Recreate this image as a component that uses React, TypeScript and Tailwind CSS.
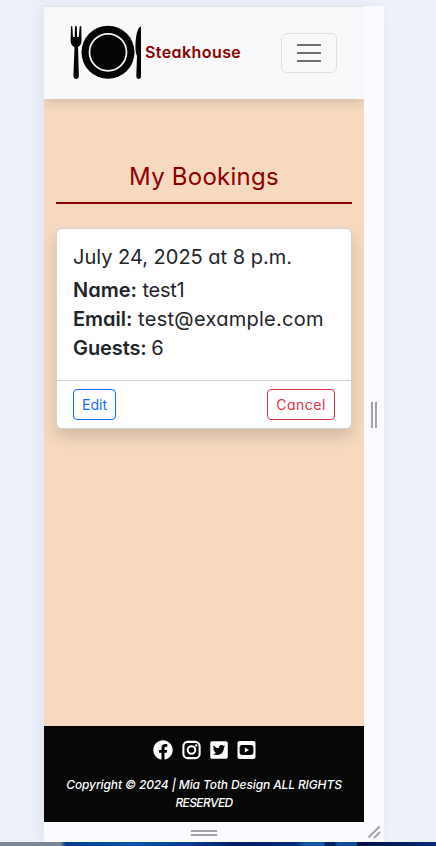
import { FaFacebook, FaTwitterSquare } from "react-icons/fa";

function PlateLogo() {
  return (
    <svg width="72" height="56" viewBox="0 0 72 56" className="shrink-0">
      <g fill="#050505">
        <path d="M1 1.5 Q1.8 .3 2.3 1.5 L3 12 L4.7 12 L5 1.5 Q5.8 .3 6.8 1.5 L7.1 12 L8.8 12 L9.7 1.5 Q10.7 .3 11.3 1.5 L11.5 16 Q11.3 20.5 8 22 L8.9 51 Q8.5 54 6.2 54 Q3.8 54 3.4 51 L4.5 22 Q.8 20.5 .6 16 Z" />
        <circle cx="38" cy="27.3" r="26.5" />
        <path d="M71 1.5 Q66.5 2.5 65.5 18 Q65 27 67 31 L66.3 51 Q66.5 54 68.8 54 Q71 54 71 51 Z" />
      </g>
      <circle cx="38" cy="27.3" r="18.5" fill="none" stroke="#f5f5f5" strokeWidth="1.7" />
    </svg>
  );
}

function InstagramIcon() {
  return (
    <svg width="19" height="20" viewBox="0 0 19 20" className="shrink-0">
      <rect x="1.4" y="1.9" width="16.2" height="16.2" rx="4.2" fill="none" stroke="white" strokeWidth="2.1" />
      <circle cx="9.5" cy="10" r="3.8" fill="none" stroke="white" strokeWidth="2" />
      <circle cx="14.2" cy="5.4" r="1.2" fill="white" />
    </svg>
  );
}

function YoutubeIcon() {
  return (
    <svg width="19" height="20" viewBox="0 0 19 20" className="shrink-0">
      <rect x=".5" y="1" width="18" height="18" rx="2" fill="white" />
      <rect x="2.6" y="5" width="13.8" height="10" rx="2.4" fill="#070707" />
      <path d="M7.8 7.5 12 10 7.8 12.5Z" fill="white" />
    </svg>
  );
}

function Navbar() {
  return (
    <header className="relative z-10 flex h-[93px] shrink-0 items-center border-t border-[#dfe1e5] bg-[#f8f9fa] pl-[26px] pr-[27px] shadow-[0_2px_12px_rgba(0,0,0,0.16)]">
      <PlateLogo />
      <span className="ml-[3px] mt-[-3px] text-[16px] font-semibold tracking-[0.42px] text-[#8b0000]">Steakhouse</span>
      <button aria-label="Menu" className="ml-auto flex h-10 w-14 flex-col items-center justify-center gap-[6px] rounded-md border border-[#dfe0e2]">
        <span className="h-[2px] w-6 bg-[#6f7072]" />
        <span className="h-[2px] w-6 bg-[#6f7072]" />
        <span className="h-[2px] w-6 bg-[#6f7072]" />
      </button>
    </header>
  );
}

function BookingCard() {
  return (
    <article className="mt-6 flex h-[201px] flex-col rounded-md border border-[#d0d1d3] bg-white text-[#212529] shadow-[0_8px_16px_rgba(0,0,0,0.15)]">
      <div className="flex-1 px-4 pt-[14px] text-[20px]">
        <h2 className="mb-1 h-[29px] whitespace-nowrap leading-[29px]">July 24, 2025 at 8 p.m.</h2>
        <p className="h-[29px] whitespace-nowrap leading-[29px]"><strong className="font-semibold">Name:</strong> <span className="tracking-[-0.25px]">test1</span></p>
        <p className="h-[29px] whitespace-nowrap leading-[29px]"><strong className="font-semibold">Email:</strong> <span className="tracking-[0.28px]">test@example.com</span></p>
        <p className="h-[29px] whitespace-nowrap leading-[29px]"><strong className="font-semibold tracking-[-0.1px]">Guests:</strong> <span className="-ml-px">6</span></p>
      </div>
      <div className="flex h-12 items-center justify-between border-t border-[#d0d1d3] px-4">
        <button className="h-[31px] w-[43px] rounded border border-[#0d6efd] text-[14px] leading-[28px] text-[#0d6efd]">Edit</button>
        <button className="h-[31px] w-[68px] rounded border border-[#dc3545] text-[14px] leading-[28px] tracking-[0.5px] text-[#dc3545]">Cancel</button>
      </div>
    </article>
  );
}

function Footer() {
  return (
    <footer className="flex h-24 shrink-0 flex-col items-center bg-[#070707] pt-[14px] text-white">
      <div className="flex gap-[9px]">
        <FaFacebook className="h-5 w-5" />
        <InstagramIcon />
        <FaTwitterSquare className="h-5 w-[18px]" />
        <YoutubeIcon />
      </div>
      <p className="mt-4 whitespace-nowrap text-center text-[12px] font-medium italic leading-[18px] tracking-[-0.12px]">
        <span>Copyright © 2024 | Mia Toth Design ALL RIGHTS</span>
        <br />
        <span className="tracking-[-0.6px]">RESERVED</span>
      </p>
    </footer>
  );
}

export default function App() {
  return (
    <div className="flex h-[846px] w-[436px] flex-col overflow-hidden bg-[#ecf1fa] pt-[6px] font-['Inter','Liberation_Sans',sans-serif] [font-feature-settings:'cv11']">
      <div className="ml-11 flex h-[836px] w-[340px] shrink-0 flex-col bg-[#f9fbff] shadow-[-4px_0_12px_rgba(80,100,130,0.08)]">
        <div className="flex h-[816px]">
          <div className="flex w-[320px] flex-col overflow-hidden bg-[#f6d9bf]">
            <Navbar />
            <main className="flex-1 px-3 pt-[60px]">
              <h1 className="h-[45px] border-b-2 border-[#8b0000] text-center text-[24px] leading-[36px] tracking-[0.25px] text-[#8b0000]">My Bookings</h1>
              <BookingCard />
            </main>
            <Footer />
          </div>
          <div className="flex w-5 justify-center gap-[2px] pt-[396px]">
            <span className="h-[26px] w-[2px] bg-[#a3a3a3]" />
            <span className="h-[26px] w-[2px] bg-[#a3a3a3]" />
          </div>
        </div>
        <div className="flex h-5">
          <div className="flex w-[320px] flex-col items-center gap-[2px] pt-2">
            <span className="h-[2px] w-[26px] bg-[#a3a3a3]" />
            <span className="h-[2px] w-[26px] bg-[#a3a3a3]" />
          </div>
          <svg width="20" height="20" viewBox="0 0 20 20" fill="none" stroke="#a3a3a3" strokeWidth="1.8">
            <path d="M4.5 15.5 15.5 4.5M10 16 16 10" />
          </svg>
        </div>
      </div>
      <div className="h-1 shrink-0 bg-[linear-gradient(90deg,#7b8794_0_60px,#073b91_66px,#0757aa_135px,#073b91_190px,#011c65_235px,#05297b_295px,#1555a5_305px_324px,#03205e_325px_335px,#124b9b_337px_356px,#020e42_358px,#082c79_436px)]" />
    </div>
  );
}
